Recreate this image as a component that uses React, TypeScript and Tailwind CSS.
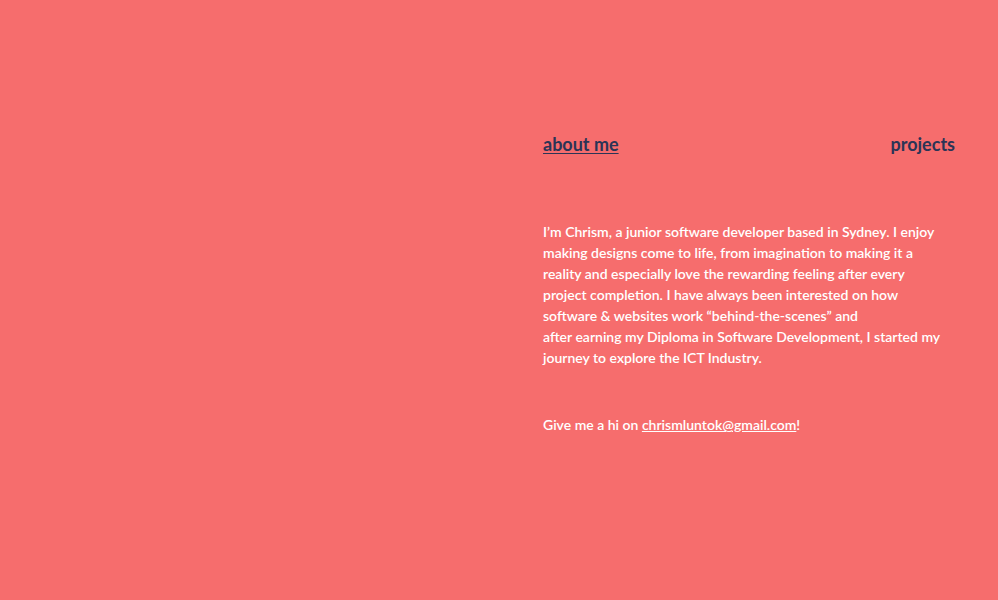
export default function App() {
  return (
    <main
      className="flex min-h-[600px] w-full bg-[#f66d6d]"
      style={{ fontFamily: 'Lato, "Noto Sans", sans-serif' }}
    >
      <div className="w-1/2" />
      <div className="flex w-1/2 flex-col pl-[44px] pr-[43px] pt-[131px]">
        <nav className="flex items-center justify-between text-[18px] font-bold text-[#2b3456]">
          <a href="#" className="underline underline-offset-2">
            about me
          </a>
          <a href="#">projects</a>
        </nav>

        <p className="mt-[63px] max-w-[405px] text-[14px] font-semibold leading-[21px] text-white">
          I’m Chrism, a junior software developer based in Sydney. I enjoy
          making designs come to life, from imagination to making it a reality
          and especially love the rewarding feeling after every project
          completion. I have always been interested on how software & websites
          work “behind-the-scenes” and
          <br />
          after earning my Diploma in Software Development, I started my
          journey to explore the ICT Industry.
        </p>

        <p className="mt-[46px] text-[14px] font-semibold leading-[21px] text-white">
          Give me a hi on{' '}
          <a href="#" className="underline">
            chrismluntok@gmail.com
          </a>
          !
        </p>
      </div>
    </main>
  );
}
